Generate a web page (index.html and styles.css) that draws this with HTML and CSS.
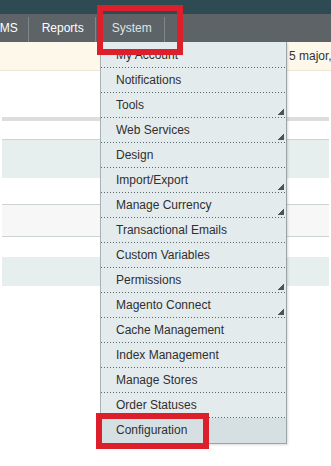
FILE: index.html
```html
<!DOCTYPE html>
<html lang="en">
  <head>
    <meta charset="UTF-8" />
    <title>System menu</title>
    <link rel="stylesheet" href="styles.css">
  </head>
  <body>
    <div class="topbar"></div>

    <nav class="nav">
      <span class="nav-item nav-cut">CMS</span>
      <span class="nav-item">Reports</span>
      <span class="nav-item nav-active">System</span>
    </nav>

    <div class="notice">5 major, 19 minor and 64 notice unread message(s).</div>

    <div class="content">
      <div class="rule"></div>
      <div class="row row-blue row-tall"></div>
      <div class="row row-grey"></div>
      <div class="row row-blue row-last"></div>
    </div>

    <ul class="dropdown">
      <li>My Account</li>
      <li>Notifications</li>
      <li class="parent">Tools</li>
      <li class="parent">Web Services</li>
      <li>Design</li>
      <li class="parent">Import/Export</li>
      <li class="parent">Manage Currency</li>
      <li>Transactional Emails</li>
      <li>Custom Variables</li>
      <li class="parent">Permissions</li>
      <li class="parent">Magento Connect</li>
      <li>Cache Management</li>
      <li>Index Management</li>
      <li>Manage Stores</li>
      <li>Order Statuses</li>
      <li class="hover">Configuration</li>
    </ul>

    <!-- annotation boxes -->
    <div class="mark mark-system"></div>
    <div class="mark mark-config"></div>
  </body>
</html>
```

FILE: styles.css
```css
*,
*::before,
*::after {
  box-sizing: border-box;
}

html,
body {
  margin: 0;
  height: 100%;
  overflow: hidden;
}

body {
  position: relative;
  background: #fff;
  font-family: "Liberation Sans", Arial, sans-serif;
  font-size: 12px;
  color: #2f2f2f;
}

.topbar {
  height: 14px;
  background: #2e4a53;
}

/* main navigation */
.nav {
  display: flex;
  height: 28px;
  background: #5d6367;
}

.nav-item {
  display: flex;
  align-items: center;
  padding: 0 12px 0 13px;
  color: #fff;
  position: relative;
}

.nav-item::after {
  content: "";
  position: absolute;
  right: 0;
  top: 3px;
  bottom: 0;
  width: 1px;
  background: #80878b;
}

.nav-cut {
  margin-left: -9px;
  padding-left: 0;
  padding-right: 11px;
}

.nav-active {
  padding-left: 16px;
  padding-right: 13px;
  color: #dde3e6;
}

.notice {
  height: 29px;
  line-height: 28px;
  padding-left: 289px;
  background: #fdf8ea;
  border-bottom: 1px solid #eee6d3;
  white-space: nowrap;
  color: #333;
}

/* grid rows behind the dropdown */
.content {
  padding: 0 2px;
}

.rule {
  height: 4px;
  margin-top: 46px;
  background: #dddddd;
}

.row {
  margin-top: 18px;
  height: 39px;
  border-top: 1px solid #cdd2d3;
}

.row-blue {
  background: #e7eeee;
}

.row-tall {
  height: 39px;
}

.row-grey {
  margin-top: 26px;
  height: 33px;
  background: #f7f7f7;
  border-bottom: 1px solid #cdd2d3;
}

.row-last {
  margin-top: 20px;
  height: 29px;
  border-top: none;
}

/* dropdown */
.dropdown {
  position: absolute;
  left: 100px;
  top: 42px;
  width: 187px;
  margin: 0;
  padding: 1px 0 0;
  list-style: none;
  background: #e4ebed;
  border-left: 1px solid #a9b3b7;
  border-right: 1px solid #9ba5a9;
  border-bottom: 1px solid #9ba5a9;
  box-shadow: 1px 1px 2px rgba(0, 0, 0, 0.15);
}

.dropdown li {
  position: relative;
  height: 25px;
  line-height: 24px;
  padding-left: 15px;
  padding-bottom: 1px;
  color: #2f2f2f;
}

.dropdown li::after {
  content: "";
  position: absolute;
  left: 0;
  right: 1px;
  bottom: 0;
  height: 1px;
  background: repeating-linear-gradient(to right, #59666c 0 1px, transparent 1px 3px);
}

.dropdown li:last-child::after {
  display: none;
}

.dropdown li.parent::before {
  content: "";
  position: absolute;
  right: 2px;
  bottom: 3px;
  width: 8px;
  height: 7px;
  background:
    linear-gradient(135deg, transparent 0 48%, #e4ebed 48% 58%, transparent 58%),
    linear-gradient(to bottom right, transparent 0 50%, #4b5458 50%);
}

.dropdown li.hover {
  background: #d6e0e3;
}

/* red annotation boxes */
.mark {
  position: absolute;
  border: 6px solid #dc1f2a;
}

.mark-system {
  left: 97px;
  top: 5px;
  width: 86px;
  height: 50px;
}

.mark-config {
  left: 96px;
  top: 413px;
  width: 113px;
  height: 36px;
}
```
